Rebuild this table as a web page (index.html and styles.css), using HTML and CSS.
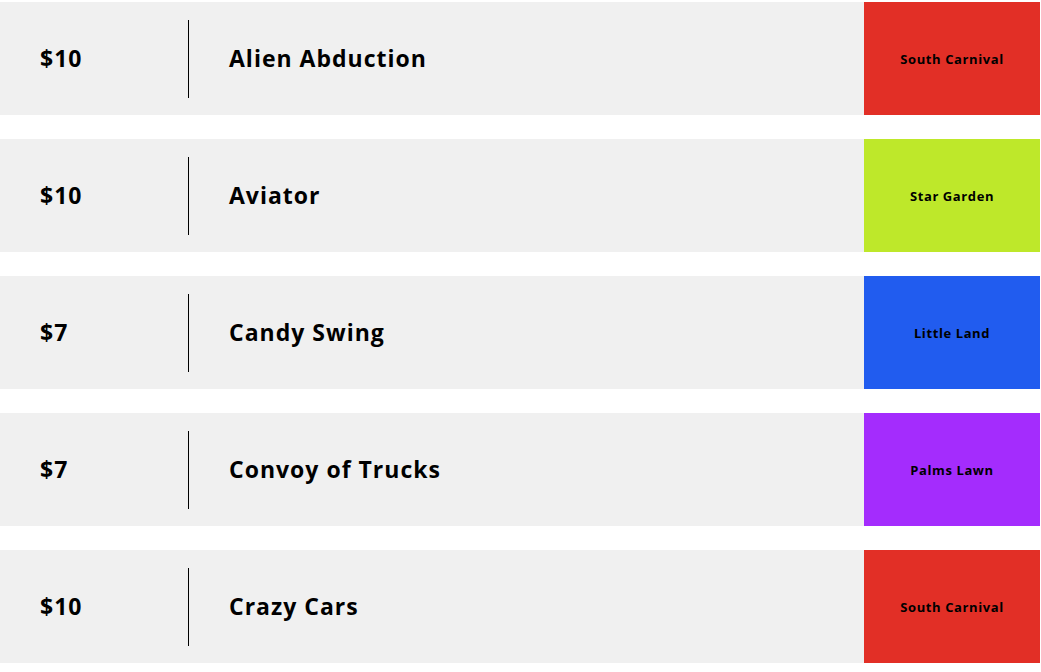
FILE: index.html
```html
<!DOCTYPE html>
<html>
<head>
<meta charset="utf-8">
<link rel="stylesheet" href="styles.css">
</head>
<body>
<ul class="rides">
  <li class="ride">
    <div class="price">$10</div>
    <div class="divider"></div>
    <div class="name">Alien Abduction</div>
    <div class="zone zone-red">South Carnival</div>
  </li>
  <li class="ride">
    <div class="price">$10</div>
    <div class="divider"></div>
    <div class="name">Aviator</div>
    <div class="zone zone-lime">Star Garden</div>
  </li>
  <li class="ride">
    <div class="price">$7</div>
    <div class="divider"></div>
    <div class="name">Candy Swing</div>
    <div class="zone zone-blue">Little Land</div>
  </li>
  <li class="ride">
    <div class="price">$7</div>
    <div class="divider"></div>
    <div class="name">Convoy of Trucks</div>
    <div class="zone zone-purple">Palms Lawn</div>
  </li>
  <li class="ride">
    <div class="price">$10</div>
    <div class="divider"></div>
    <div class="name">Crazy Cars</div>
    <div class="zone zone-red">South Carnival</div>
  </li>
</ul>
</body>
</html>
```
FILE: styles.css
```css
html, body {
  margin: 0;
  padding: 0;
  background: #ffffff;
}
body {
  font-family: "Open Sans", "Liberation Sans", sans-serif;
  color: #000;
}
.rides {
  list-style: none;
  margin: 0;
  padding: 2px 0 0 0;
  width: 1040px;
  display: flex;
  flex-direction: column;
  gap: 24px;
}
.ride {
  display: flex;
  align-items: center;
  height: 113px;
  background: #f0f0f0;
}
.price {
  width: 148px;
  padding-left: 40px;
  padding-bottom: 2px;
  font-size: 23px;
  font-weight: 700;
  letter-spacing: 1px;
}
.divider {
  width: 1px;
  height: 78px;
  background: #000;
}
.name {
  flex: 1;
  padding-left: 40px;
  padding-bottom: 2px;
  font-size: 23px;
  font-weight: 700;
  letter-spacing: 1px;
}
.zone {
  align-self: stretch;
  width: 176px;
  display: flex;
  align-items: center;
  justify-content: center;
  font-size: 13px;
  font-weight: 700;
  letter-spacing: 0.6px;
}
.zone-red { background: #e22f26; }
.zone-lime { background: #bee82a; }
.zone-blue { background: #215cef; }
.zone-purple { background: #a42cfd; }
```
